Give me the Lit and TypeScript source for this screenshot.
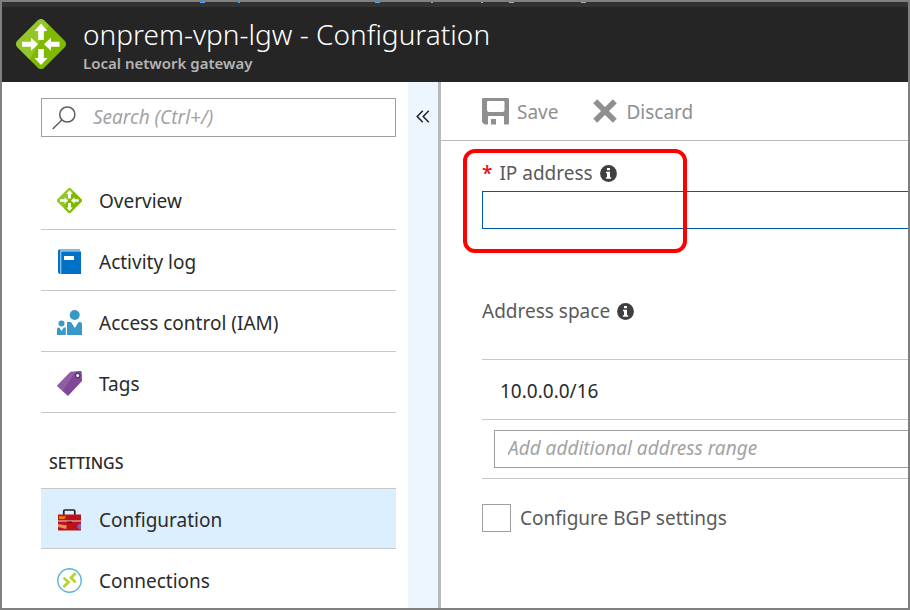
import { LitElement, html, svg, css, nothing } from "lit";
import { customElement, property } from "lit/decorators.js";

const gateway = svg`
  <svg viewBox="0 0 50 50" aria-hidden="true">
    <path fill="#7fba00" d="M21.800 1.300a4.500 4.500 0 0 1 6.400 0L48.700 21.800a4.500 4.500 0 0 1 0 6.400L28.200 48.700a4.500 4.500 0 0 1-6.400 0L1.300 28.200a4.500 4.500 0 0 1 0-6.400Z"/>
    <path fill="#fff" opacity=".17" d="M21.800 1.300a4.500 4.500 0 0 1 6.400 0L33 6 13.500 40.400 1.300 28.200a4.500 4.500 0 0 1 0-6.400Z"/>
    <path fill="#fff" d="M25 4.500l6.500 7.500h-3.700v9h-5.600v-9h-3.700ZM25 46l-6.500-7h3.700v-9h5.600v9h3.700ZM22 25.200l-7 6.500v-4H6v-5h9v-4ZM28 25.200l7-6.500v4h8.500v5H35v4Z"/>
  </svg>`;

const book = svg`
  <svg viewBox="0 0 25 25" aria-hidden="true">
    <path fill="#0072c6" d="M1 1.500 2 .500h21v1H3.500V25h-1L1 23.500Z"/>
    <path fill="#8fc1e8" d="M3.200 1.500H23v1H4.200V25h-1Z"/>
    <path fill="#0072c6" d="M4.200 2.500H24V25H4.200Z"/>
    <path fill="#fff" d="M7 7h10v4H7Z"/>
  </svg>`;

const people = svg`
  <svg viewBox="0 0 25 25" aria-hidden="true">
    <g fill="#3999c6">
      <circle cx="17.700" cy="5" r="5"/>
      <circle cx="4.500" cy="13.500" r="3"/>
      <path d="M10 12h4l3.800 6 3.900-6H23a2 2 0 0 1 2 2v11H10Z"/>
      <path d="M0 19a1.500 1.500 0 0 1 1.500-1.500h.8L4.500 21l2.300-3.500h2V25H0Z"/>
    </g>
  </svg>`;

const tag = svg`
  <svg viewBox="0 0 25 25" aria-hidden="true">
    <path fill="#804998" d="M13.500.800 23 0a1.500 1.500 0 0 1 1.700 1.500L25 10 11 25 .500 15.500a1 1 0 0 1 0-1.500Z"/>
    <path fill="#fff" opacity=".12" d="M13.500.800 19 .300 5.500 20 .500 15.500a1 1 0 0 1 0-1.500Z"/>
    <circle cx="20.700" cy="4.500" r="2.200" fill="#fff" stroke="#5c2d73" stroke-width="1.300"/>
  </svg>`;

const toolbox = svg`
  <svg viewBox="0 0 25 25" aria-hidden="true">
    <path fill="none" stroke="#222" stroke-width="1.700" stroke-linejoin="round" d="M6.800 7V3a1 1 0 0 1 1-1h9a1 1 0 0 1 1 1v4"/>
    <path fill="#ba141a" d="M1 6.500h23V22.500H1Z"/>
    <path fill="#e8d9dc" d="M1 12.500h23v1H1Z"/>
    <path fill="#7a0c12" d="M10 13.500h5v1.800h-5Z"/>
    <path fill="#f07d00" d="M2 8.200h7L7.500 11H2Z"/>
    <path fill="#ee8a5f" d="M1 16l9 1.600-1 3.500-8-2Z"/>
    <path fill="#8a5bb5" d="M24 16v5a2.700 2.700 0 1 1 0-5Z"/>
  </svg>`;

const connection = svg`
  <svg viewBox="0 0 25 25" aria-hidden="true">
    <circle cx="12.500" cy="12.500" r="11.700" fill="#fff" stroke="#59b4d9" stroke-width="1.400"/>
    <path fill="none" stroke="#b8d432" stroke-width="2.800" d="m6.500 9.800 5 4.200-5 5M18.700 5.300 14 9.800l4.600 4.600"/>
  </svg>`;

const search = svg`
  <svg viewBox="0 0 24 24" aria-hidden="true">
    <g fill="none" stroke="#5f5f5f" stroke-width="1.500">
      <circle cx="15.300" cy="8.500" r="7.600"/>
      <path d="M9.800 14 .700 23"/>
    </g>
  </svg>`;

const chevrons = svg`
  <svg viewBox="0 0 14 13" aria-hidden="true">
    <path fill="none" stroke="#222" stroke-width="1.500" d="M6.800.700 1.200 6.500l5.600 5.800M12.800.700 7.200 6.500l5.600 5.800"/>
  </svg>`;

const floppy = svg`
  <svg viewBox="0 0 27 27" aria-hidden="true">
    <path fill="#8f8f8f" fill-rule="evenodd" d="M1 0h25a1 1 0 0 1 1 1v24.500a1 1 0 0 1-1 1h-4V19a1 1 0 0 0-1-1H7a1 1 0 0 0-1 1v7.500H2.500L0 24V1a1 1 0 0 1 1-1ZM5 4v8a2 2 0 0 0 2 2h13.500a2 2 0 0 0 2-2V4a1 1 0 0 0-1-1H6a1 1 0 0 0-1 1Z"/>
    <path fill="#8f8f8f" d="M9 21h5v5.500H9Z"/>
  </svg>`;

const cross = svg`
  <svg viewBox="0 0 24 24" aria-hidden="true">
    <path fill="none" stroke="#8f8f8f" stroke-width="5.600" d="M2.200 2.200l19.600 19.600M21.800 2.200 2.200 21.800"/>
  </svg>`;

const info = svg`
  <svg viewBox="0 0 17 17" role="img" aria-label="Information">
    <circle cx="8.500" cy="8.500" r="8.400" fill="#3f3f3f"/>
    <path fill="#fff" d="M7 2.900h3v2.400H7ZM6 6.700h4v5.600h1.200v1.500H5.900v-1.500H7V8.200H6Z"/>
  </svg>`;

@customElement("nav-item")
export class NavItem extends LitElement {
  @property() label = "";
  @property({ type: Boolean, reflect: true }) selected = false;
  @property({ attribute: false }) icon: unknown = nothing;

  static styles = css`
    :host {
      display: block;
    }
    .link {
      display: flex;
      align-items: center;
      gap: 17px;
      box-sizing: border-box;
      height: 61px;
      padding: 3px 16px 0;
      border-bottom: 1px solid #c8c8c8;
      color: #2b2b2b;
      text-decoration: none;
      font-size: 19px;
      line-height: 26px;
    }
    :host([selected]) .link {
      border-top: 1px solid #c8c8c8;
      background: #dceffe;
    }
    .icon {
      width: 25px;
      height: 25px;
      flex: none;
    }
    .icon svg {
      display: block;
      width: 100%;
      height: 100%;
    }
  `;

  render() {
    return html`<a class="link" href="#" aria-current=${this.selected ? "page" : nothing}>
      <span class="icon">${this.icon}</span><span>${this.label}</span>
    </a>`;
  }
}

@customElement("app-root")
export class AppRoot extends LitElement {
  private general = [
    { label: "Overview", icon: gateway },
    { label: "Activity log", icon: book },
    { label: "Access control (IAM)", icon: people },
    { label: "Tags", icon: tag },
  ];
  private settings = [
    { label: "Configuration", icon: toolbox, selected: true },
    { label: "Connections", icon: connection, selected: false },
  ];

  static styles = css`
    :host {
      display: flex;
      flex-direction: column;
      box-sizing: border-box;
      height: 100vh;
      overflow: hidden;
      border: 2px solid #808080;
      background: #fff;
      color: #2b2b2b;
      font-family: "Noto Sans", "Segoe UI", sans-serif;
      font-size: 19px;
      line-height: 26px;
    }
    svg {
      display: block;
      width: 100%;
      height: 100%;
    }
    .strip {
      height: 5px;
      flex: none;
      background: #333;
    }
    .strip svg {
      width: 600px;
      height: 1px;
    }
    .header {
      display: flex;
      align-items: center;
      gap: 17px;
      height: 75px;
      flex: none;
      box-sizing: border-box;
      padding: 0 14px 2px;
      background: #252525;
    }
    .logo {
      width: 50px;
      height: 50px;
      flex: none;
    }
    .title {
      margin: 0;
      color: #fff;
      font-size: 28px;
      font-weight: 300;
      line-height: 38px;
      white-space: nowrap;
    }
    .subtitle {
      margin: 0;
      color: #b4b4b4;
      font-size: 15px;
      font-weight: 600;
      line-height: 20px;
    }
    .body {
      display: flex;
      flex: 1;
      min-height: 0;
    }
    .menu {
      width: 355px;
      flex: none;
      padding: 16px 12px 0 39px;
    }
    .search {
      display: flex;
      align-items: center;
      gap: 17px;
      height: 37px;
      box-sizing: content-box;
      margin-bottom: 32px;
      padding: 0 10px;
      border: 1px solid #a0a0a0;
    }
    .search-icon {
      width: 24px;
      height: 24px;
      flex: none;
    }
    .field {
      min-width: 0;
      box-sizing: border-box;
      border: 0;
      border-radius: 0;
      outline: 0;
      background: #fff;
      color: #2b2b2b;
      font: inherit;
    }
    .field::placeholder {
      color: #a3a3a3;
      font-style: italic;
      opacity: 1;
    }
    .search .field {
      flex: 1;
      padding: 0 0 2px;
    }
    .group {
      margin: 37px 8px 12px;
      font-size: 16px;
      font-weight: 500;
      line-height: 26px;
    }
    .collapse {
      display: flex;
      justify-content: center;
      width: 33px;
      flex: none;
      margin: 0;
      padding: 28px 0 0;
      border: 0;
      border-right: 3px solid #b9b9b9;
      background: #edf5ff;
    }
    .chevrons {
      width: 14px;
      height: 13px;
    }
    .main {
      flex: 1;
      min-width: 0;
    }
    .toolbar {
      display: flex;
      gap: 35px;
      height: 58px;
      padding-left: 41px;
      border-bottom: 1px solid #b9b9b9;
    }
    .command {
      display: flex;
      align-items: center;
      gap: 8px;
      padding: 2px 0 0;
      border: 0;
      background: none;
      color: #8f8f8f;
      font: inherit;
    }
    .save-icon {
      width: 27px;
      height: 27px;
      margin-bottom: 2px;
    }
    .discard-icon {
      width: 24px;
      height: 24px;
      margin: 0 1px 2px 0;
    }
    .form {
      padding: 19px 0 0 41px;
    }
    .ip {
      position: relative;
    }
    .label {
      display: flex;
      align-items: center;
      gap: 7px;
      margin: 0;
      color: #5a5a5a;
      font-size: 19px;
      font-weight: 400;
    }
    .required {
      color: #e81123;
      font-weight: 600;
    }
    .info {
      width: 17px;
      height: 17px;
    }
    .ip .field {
      display: block;
      width: 100%;
      height: 38px;
      margin-top: 5px;
      padding: 0 12px;
      border: 1px solid #0058a8;
      border-right: 0;
    }
    .callout {
      position: absolute;
      left: -19px;
      top: -11px;
      width: 224px;
      height: 104px;
      box-sizing: border-box;
      border: 4px solid #f00;
      border-radius: 12px;
      pointer-events: none;
    }
    .space {
      margin-top: 69px;
    }
    .ranges {
      width: 100%;
      margin-top: 35px;
      border-collapse: collapse;
    }
    .range {
      height: 60px;
      box-sizing: border-box;
      padding: 3px 18px 0;
      border-top: 1px solid #c8c8c8;
      border-bottom: 1px solid #c8c8c8;
    }
    .new-range {
      padding: 10px 0 10px 12px;
      border-bottom: 1px solid #c8c8c8;
    }
    .new-range .field {
      display: block;
      width: 100%;
      height: 38px;
      padding: 0 13px 2px;
      border: 1px solid #a0a0a0;
      border-right: 0;
    }
    .bgp {
      display: flex;
      align-items: center;
      gap: 9px;
      margin-top: 25px;
      color: #5a5a5a;
    }
    .check {
      appearance: none;
      width: 29px;
      height: 28px;
      box-sizing: border-box;
      margin: 0;
      border: 1px solid #a0a0a0;
      background: #fff;
    }
  `;

  private items(list: { label: string; icon: unknown; selected?: boolean }[]) {
    return list.map(
      (i) => html`<nav-item .label=${i.label} .icon=${i.icon} ?selected=${i.selected ?? false}></nav-item>`
    );
  }

  render() {
    return html`
      <div class="strip">
        <svg viewBox="0 0 600 1" aria-hidden="true">
          <path fill="#4aa8ff" d="M198 0h5v1h-5ZM236 0h2v1h-2ZM373 0h5v1h-5Z"/>
          <path fill="#a8a8a8" d="M429 0h2v1h-2ZM479 0h2v1h-2ZM507 0h5v1h-5ZM579 0h5v1h-5Z"/>
        </svg>
      </div>
      <header class="header">
        <div class="logo">${gateway}</div>
        <div>
          <h1 class="title">onprem-vpn-lgw - Configuration</h1>
          <p class="subtitle">Local network gateway</p>
        </div>
      </header>
      <div class="body">
        <nav class="menu">
          <div class="search">
            <span class="search-icon">${search}</span>
            <input class="field" type="search" placeholder="Search (Ctrl+/)" aria-label="Search" />
          </div>
          ${this.items(this.general)}
          <h2 class="group">SETTINGS</h2>
          ${this.items(this.settings)}
        </nav>
        <button class="collapse" aria-label="Collapse menu">
          <span class="chevrons">${chevrons}</span>
        </button>
        <main class="main">
          <div class="toolbar">
            <button class="command"><span class="save-icon">${floppy}</span>Save</button>
            <button class="command"><span class="discard-icon">${cross}</span>Discard</button>
          </div>
          <form class="form">
            <div class="ip">
              <label class="label" for="ip">
                <span class="required">*</span>IP address<span class="info">${info}</span>
              </label>
              <input class="field" id="ip" type="text" required />
              <div class="callout"></div>
            </div>
            <h2 class="label space" id="space">Address space<span class="info">${info}</span></h2>
            <table class="ranges" aria-labelledby="space">
              <tr><td class="range">10.0.0.0/16</td></tr>
              <tr>
                <td class="new-range">
                  <input class="field" type="text" placeholder="Add additional address range" aria-label="Add additional address range" />
                </td>
              </tr>
            </table>
            <label class="bgp"><input class="check" type="checkbox" />Configure BGP settings</label>
          </form>
        </main>
      </div>
    `;
  }
}
